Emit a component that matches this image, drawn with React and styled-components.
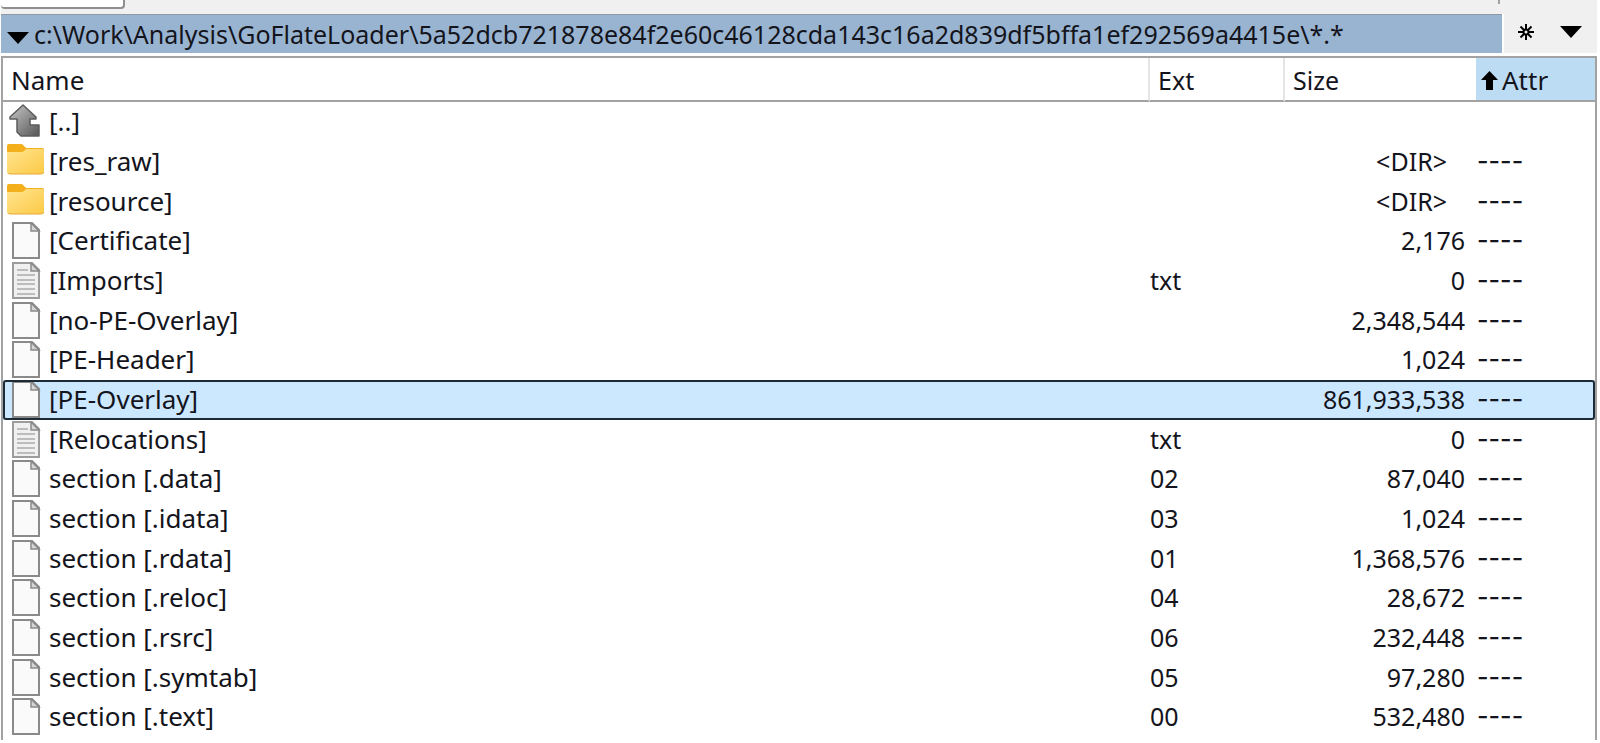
import React, { useState } from "react";
import styled, { createGlobalStyle } from "styled-components";

const GlobalStyle = createGlobalStyle`
  * {
    box-sizing: border-box;
  }
  body {
    margin: 0;
    background: #ffffff;
    color: #14141c;
    font-family: 'Noto Sans', 'Open Sans', sans-serif;
    font-size: 25px;
    overflow: hidden;
  }
`;

const Window = styled.main`
  padding: 0 3px 3px 1px;
`;

const TabStrip = styled.div`
  display: flex;
  justify-content: space-between;
  height: 14px;
  padding-right: 97px;
  background: #f0f0f0;
`;

const DriveTab = styled.div`
  width: 124px;
  height: 9px;
  background: #ffffff;
  border: 2px solid #8e8e8e;
  border-top: none;
  border-left: none;
  border-radius: 0 0 4px 4px;
`;

const Divider = styled.div`
  width: 2px;
  height: 4px;
  background: #a0a0a0;
`;

const PathRow = styled.div`
  display: flex;
  gap: 2px;
  height: 39px;
  margin-bottom: 3px;
`;

const PathBar = styled.div`
  display: flex;
  flex: 1;
  align-items: center;
  min-width: 0;
  padding-left: 6px;
  background: #99b4d1;
  border-top: 1px solid #8f9aa6;
`;

const PathText = styled.span`
  padding-left: 5px;
  line-height: 36px;
  white-space: nowrap;
`;

const Tools = styled.div`
  display: flex;
  align-items: center;
  justify-content: space-between;
  width: 93px;
  padding: 0 15px 4px 13px;
  background: #f0f0f0;
`;

const IconButton = styled.button`
  display: flex;
  padding: 0;
  border: none;
  background: none;
  cursor: pointer;
`;

const DrivesButton = styled(IconButton)`
  padding-top: 8px;
`;

const Panel = styled.div`
  padding-bottom: 3px;
  border: 2px solid #a2a2a2;
  border-bottom: none;
`;

const FileTable = styled.table`
  width: 100%;
  table-layout: fixed;
  border-collapse: separate;
  border-spacing: 0;
`;

const HeadCell = styled.th`
  width: ${(props) => props.$width || "auto"};
  height: 44px;
  padding: 2px 0 0;
  background: ${(props) => (props.$sorted ? "#bcdcf4" : "#ffffff")};
  border-right: ${(props) => (props.$line ? "2px solid #e5e5e5" : "none")};
  border-bottom: 2px solid #a2a2a2;
`;

const SortButton = styled.button`
  display: flex;
  align-items: center;
  gap: 4px;
  width: 100%;
  padding: 0 ${(props) => (props.$sorted ? "5px" : "8px")};
  border: none;
  background: none;
  color: inherit;
  font: inherit;
  font-size: ${(props) => (props.$large ? "26px" : "25px")};
  font-weight: 400;
  line-height: 36px;
  cursor: pointer;
`;

const Row = styled.tr`
  height: 40px;
  background: ${(props) => (props.$selected ? "#cce8ff" : "transparent")};
  outline: ${(props) => (props.$selected ? "2px solid #1d2b36" : "none")};
  outline-offset: -2px;
  border-radius: 3px;
  cursor: default;

  &:nth-child(3n) {
    height: 39px;
  }
`;

const Cell = styled.td`
  padding: 0 0 2px;
  line-height: 36px;
  white-space: nowrap;
`;

const NameCell = styled(Cell)`
  padding: 0;
  font-size: 26px;
`;

const NameBox = styled.div`
  display: flex;
  gap: 4px;
  padding-left: 4px;
`;

const SizeCell = styled(Cell)`
  padding-right: ${(props) => (props.$dir ? "29px" : "11px")};
  text-align: right;
`;

const AttrCell = styled(Cell)`
  padding-left: 1px;
  font-family: 'Inter', sans-serif;
  font-weight: 500;
`;

const DownTriangle = () => (
  <svg width="22" height="12" viewBox="0 0 22 12" aria-hidden="true">
    <path d="M0 0H22L11 12Z" fill="#000" />
  </svg>
);

const Star = () => (
  <svg width="18" height="18" viewBox="0 0 18 18" aria-hidden="true">
    <g stroke="#000" strokeWidth="2" fill="none">
      <path d="M9 1V6M9 12V17M1 9H6M12 9H17M3.5 3.5L7 7M11 11L14.5 14.5M14.5 3.5L11 7M7 11L3.5 14.5" />
      <circle cx="9" cy="9" r="2.500" />
    </g>
  </svg>
);

const SortArrow = () => (
  <svg width="17" height="19" viewBox="0 0 17 19" aria-hidden="true">
    <path d="M8.500 0L17 9H12V19H5V9H0Z" fill="#000" />
  </svg>
);

const UpIcon = () => (
  <svg width="38" height="38" viewBox="0 0 38 38" aria-hidden="true">
    <defs>
      <linearGradient id="up" x1="0" y1="0" x2="1" y2="1">
        <stop offset="0" stopColor="#c8c8c8" />
        <stop offset="1" stopColor="#565656" />
      </linearGradient>
    </defs>
    <path
      d="M16 2L29 14V16H23V22H32V33H14L10 29V16H3V14Z"
      fill="url(#up)"
      stroke="#5c5c5c"
      strokeWidth="1.500"
      strokeLinejoin="round"
    />
  </svg>
);

const FolderIcon = () => (
  <svg width="38" height="38" viewBox="0 0 38 38" aria-hidden="true">
    <defs>
      <linearGradient id="folder" x1="0" y1="0" x2="1" y2="1">
        <stop offset="0" stopColor="#ffe491" />
        <stop offset="1" stopColor="#fcca45" />
      </linearGradient>
    </defs>
    <path d="M0 3Q0 1 2 1H14Q16 1 17 3L19 5H35Q37 5 37 7V20H0Z" fill="#f3b01c" />
    <path d="M0 9H14Q16 9 17 8L19 6H35Q37 6 37 8V29Q37 31 35 31H2Q0 31 0 29Z" fill="url(#folder)" />
    <path d="M1 30Q2 31 3 31H34Q36 31 37 29" stroke="#e5a83a" fill="none" />
  </svg>
);

const FileIcon = ({ lined }) => (
  <svg width="38" height="38" viewBox="0 0 38 38" aria-hidden="true">
    <path
      d="M6 1H25L32 8V36H6Z"
      fill={lined ? "#f0f0f0" : "#fafafa"}
      stroke={lined ? "#9c9c9c" : "#8a8a8a"}
      strokeWidth="2"
    />
    <path d="M24 1V9H32Z" fill="#d5d5d5" stroke="#8a8a8a" strokeWidth="1.500" />
    {lined && <path d="M10 8H21M10 13H28M10 18H28M10 22H28M10 27H28M10 32H28" stroke="#ababab" strokeWidth="1.500" />}
  </svg>
);

const icons = {
  up: <UpIcon />,
  folder: <FolderIcon />,
  file: <FileIcon />,
  text: <FileIcon lined />,
};

const files = [
  { icon: "up", name: "[..]" },
  { icon: "folder", name: "[res_raw]", size: "<DIR>" },
  { icon: "folder", name: "[resource]", size: "<DIR>" },
  { icon: "file", name: "[Certificate]", size: "2,176" },
  { icon: "text", name: "[Imports]", ext: "txt", size: "0" },
  { icon: "file", name: "[no-PE-Overlay]", size: "2,348,544" },
  { icon: "file", name: "[PE-Header]", size: "1,024" },
  { icon: "file", name: "[PE-Overlay]", size: "861,933,538" },
  { icon: "text", name: "[Relocations]", ext: "txt", size: "0" },
  { icon: "file", name: "section [.data]", ext: "02", size: "87,040" },
  { icon: "file", name: "section [.idata]", ext: "03", size: "1,024" },
  { icon: "file", name: "section [.rdata]", ext: "01", size: "1,368,576" },
  { icon: "file", name: "section [.reloc]", ext: "04", size: "28,672" },
  { icon: "file", name: "section [.rsrc]", ext: "06", size: "232,448" },
  { icon: "file", name: "section [.symtab]", ext: "05", size: "97,280" },
  { icon: "file", name: "section [.text]", ext: "00", size: "532,480" },
];

const App = () => {
  const [selected, setSelected] = useState("[PE-Overlay]");

  return (
    <>
      <GlobalStyle />
      <Window>
        <TabStrip>
          <DriveTab />
          <Divider />
        </TabStrip>
        <PathRow>
          <PathBar>
            <DrivesButton aria-label="Drives">
              <DownTriangle />
            </DrivesButton>
            <PathText>
              {"c:\\Work\\Analysis\\GoFlateLoader\\5a52dcb721878e84f2e60c46128cda143c16a2d839df5bffa1ef292569a4415e\\*.*"}
            </PathText>
          </PathBar>
          <Tools>
            <IconButton aria-label="Favourites">
              <Star />
            </IconButton>
            <IconButton aria-label="History">
              <DownTriangle />
            </IconButton>
          </Tools>
        </PathRow>
        <Panel>
          <FileTable>
            <thead>
              <tr>
                <HeadCell $line>
                  <SortButton $large>Name</SortButton>
                </HeadCell>
                <HeadCell $line $width="135px">
                  <SortButton>Ext</SortButton>
                </HeadCell>
                <HeadCell $width="191px">
                  <SortButton>Size</SortButton>
                </HeadCell>
                <HeadCell $sorted $width="119px">
                  <SortButton $sorted $large>
                    <SortArrow />
                    Attr
                  </SortButton>
                </HeadCell>
              </tr>
            </thead>
            <tbody>
              {files.map((file) => (
                <Row
                  key={file.name}
                  $selected={file.name === selected}
                  onClick={() => setSelected(file.name)}
                >
                  <NameCell>
                    <NameBox>
                      {icons[file.icon]}
                      {file.name}
                    </NameBox>
                  </NameCell>
                  <Cell>{file.ext}</Cell>
                  <SizeCell $dir={file.icon === "folder"}>{file.size}</SizeCell>
                  <AttrCell>{file.size && "----"}</AttrCell>
                </Row>
              ))}
            </tbody>
          </FileTable>
        </Panel>
      </Window>
    </>
  );
};

export default App;
